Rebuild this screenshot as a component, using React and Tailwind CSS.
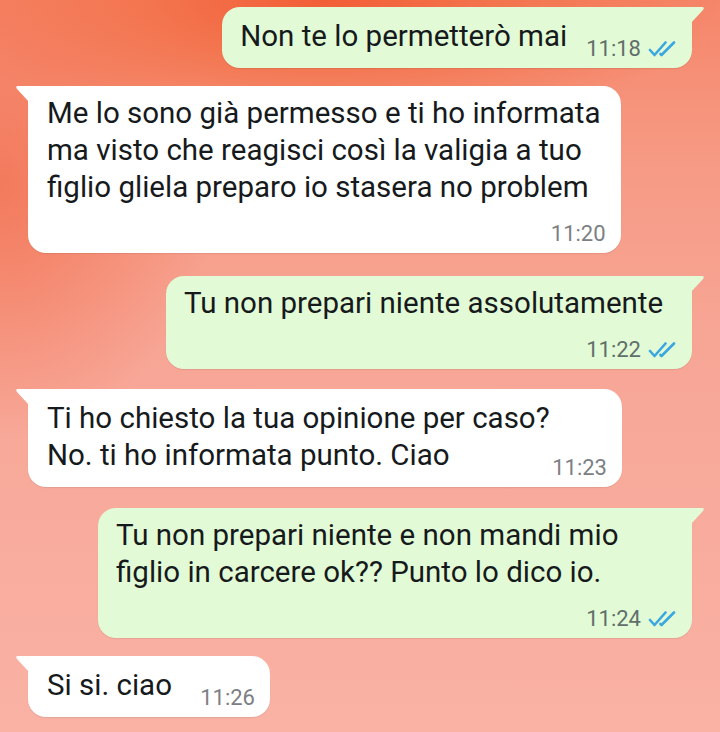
import React from 'react';

const messages = [
  { out: true, lines: ['Non te lo permetterò mai'], time: '11:18', inline: true, mt: 'mt-0' },
  {
    out: false,
    lines: [
      'Me lo sono già permesso e ti ho informata',
      'ma visto che reagisci così la valigia a tuo',
      'figlio gliela preparo io stasera no problem',
    ],
    time: '11:20',
    mt: 'mt-[18px]',
  },
  { out: true, lines: ['Tu non prepari niente assolutamente'], time: '11:22', w: 'w-[526px]', mt: 'mt-[23px]' },
  {
    out: false,
    lines: ['Ti ho chiesto la tua opinione per caso?', 'No. ti ho informata punto. Ciao'],
    time: '11:23',
    inline: true,
    w: 'w-[594px]',
    mt: 'mt-[20px]',
  },
  {
    out: true,
    lines: ['Tu non prepari niente e non mandi mio', 'figlio in carcere ok?? Punto lo dico io.'],
    time: '11:24',
    w: 'w-[594px]',
    mt: 'mt-[21px]',
  },
  { out: false, lines: ['Si si. ciao'], time: '11:26', inline: true, w: 'w-[242px]', mt: 'mt-[18px]' },
];

function Ticks() {
  return (
    <svg width="30" height="16" viewBox="0 0 30 16" className="shrink-0">
      <path d="M2 9 L6.5 14 L17.5 1.5" fill="none" stroke="#3aa7e0" strokeWidth="2.6" strokeLinecap="round" strokeLinejoin="round" />
      <path d="M12.5 13 L13.5 14 L26 1.5" fill="none" stroke="#3aa7e0" strokeWidth="2.6" strokeLinecap="round" strokeLinejoin="round" />
    </svg>
  );
}

function Tail({ out }) {
  // small pointer at the top corner of the bubble
  return out ? (
    <svg width="14" height="16" viewBox="0 0 14 16" className="absolute top-0 -right-[13px]">
      <path d="M0 0 H11 Q14 0 12 3 L0 16 Z" fill="#e3fad6" />
    </svg>
  ) : (
    <svg width="14" height="16" viewBox="0 0 14 16" className="absolute top-0 -left-[13px]">
      <path d="M14 0 H3 Q0 0 2 3 L14 16 Z" fill="#ffffff" />
    </svg>
  );
}

function Time({ msg }) {
  return (
    <div className="flex items-center gap-[7px] shrink-0">
      <span className={msg.out ? 'text-[22px] leading-6 text-[#5f6f6a]' : 'text-[22px] leading-6 text-[#7b8084]'}>
        {msg.time}
      </span>
      {msg.out && <Ticks />}
    </div>
  );
}

function Bubble({ msg }) {
  const head = msg.inline ? msg.lines.slice(0, -1) : msg.lines;
  const last = msg.lines[msg.lines.length - 1];

  return (
    <div
      className={
        (msg.out
          ? 'relative self-end max-w-[600px] bg-[#e3fad6] rounded-[18px] rounded-tr-none pl-[18px] pr-[14px] shadow-[0_1px_1px_rgba(0,0,0,0.08)] '
          : 'relative self-start max-w-[600px] bg-white rounded-[18px] rounded-tl-none pl-[19px] pr-[15px] shadow-[0_1px_1px_rgba(0,0,0,0.08)] ') +
        (msg.w || '') + ' ' + msg.mt
      }
    >
      <Tail out={msg.out} />
      <div className={msg.inline ? 'pt-[11px] pb-[13px]' : 'pt-[9px] pb-[7px]'}>
        {head.map((l, i) => (
          <div key={i} className="whitespace-nowrap text-[29.5px] leading-[37px] text-[#161a1c] pr-[5px]">
            {l}
          </div>
        ))}
        {msg.inline ? (
          <div className="flex items-end justify-between gap-[19px]">
            <span className="whitespace-nowrap text-[29.5px] leading-[37px] text-[#161a1c]">{last}</span>
            <div className="-mb-[6px]">
              <Time msg={msg} />
            </div>
          </div>
        ) : (
          <div className="flex justify-end mt-[16px]">
            <Time msg={msg} />
          </div>
        )}
      </div>
    </div>
  );
}

export default function App() {
  return (
    <div
      className="w-[720px] h-[732px] overflow-hidden flex flex-col px-[28px] pt-[7px] bg-[radial-gradient(ellipse_55%_18%_at_45%_0%,#f25d36_0%,#f3754f_45%,transparent_100%),radial-gradient(ellipse_30%_35%_at_0%_25%,#f37a5c_0%,transparent_100%),linear-gradient(180deg,#f5866a_0%,#f69a84_22%,#f7a595_45%,#f8ab9c_70%,#f9b2a4_100%)]"
      style={{ fontFamily: 'Roboto, "Noto Sans", sans-serif' }}
    >
      {messages.map((m, i) => (
        <Bubble key={i} msg={m} />
      ))}
    </div>
  );
}
